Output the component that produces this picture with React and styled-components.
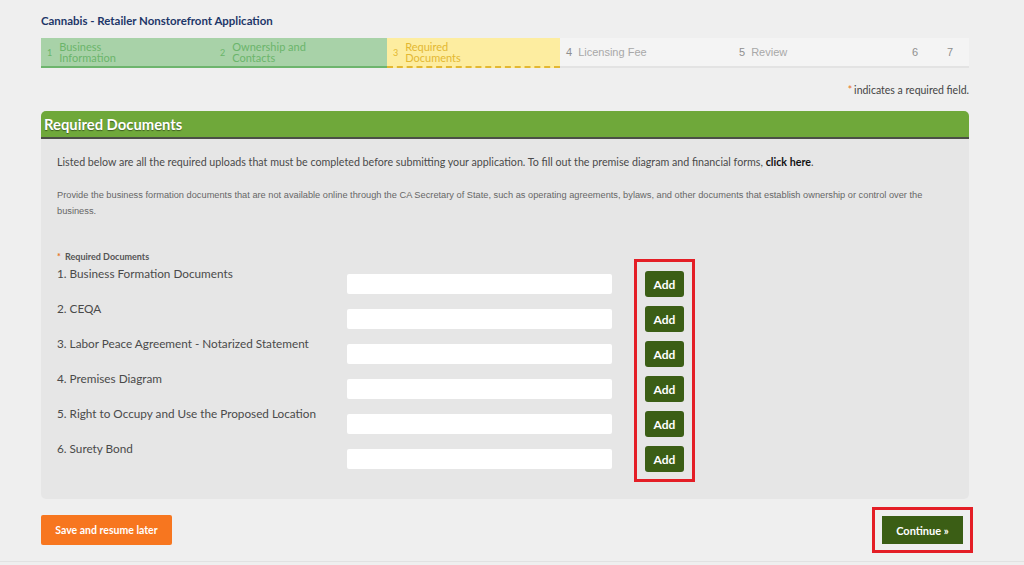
import React from "react";
import styled, { createGlobalStyle } from "styled-components";

const Global = createGlobalStyle`
  html, body { margin: 0; padding: 0; background: #efefef; }
  body { font-family: Lato, "Open Sans", sans-serif; }
  * { box-sizing: border-box; }
`;

const Page = styled.div`
  width: 1024px;
  height: 565px;
  overflow: hidden;
  background: #efefef;
  display: flex;
  flex-direction: column;
`;

const Wrap = styled.div`
  width: 928px;
  margin-left: 41px;
  display: flex;
  flex-direction: column;
`;

const Title = styled.div`
  margin-top: 14px;
  font-size: 11.45px;
  line-height: 14px;
  font-weight: 700;
  color: #1d3668;
`;

const Steps = styled.div`
  margin-top: 10px;
  height: 30px;
  display: flex;
  background: #f4f4f4;
`;

const stepTheme = {
  done: { bg: "#a8d2a8", border: "2px solid #6db56d", color: "#6bb56b", num: "#6bb56b", gap: 7 },
  current: { bg: "#fdeda0", border: "2px dashed #e3b832", color: "#e3b832", num: "#e3b832", gap: 7 },
  todo: { bg: "#f4f4f4", border: "2px solid #e3e3e3", color: "#a8a8a8", num: "#8f8f8f", gap: 6 },
};

const Step = styled.div`
  width: ${(p) => p.$w}px;
  display: flex;
  align-items: center;
  gap: ${(p) => stepTheme[p.$state].gap}px;
  padding-left: 6px;
  background: ${(p) => stepTheme[p.$state].bg};
  border-bottom: ${(p) => stepTheme[p.$state].border};
  color: ${(p) => stepTheme[p.$state].color};
`;

const StepNum = styled.span`
  font-size: ${(p) => (p.$state === "todo" ? 11 : 9)}px;
  font-family: ${(p) => (p.$state === "todo" ? '"Liberation Sans", Arial, sans-serif' : "Lato, sans-serif")};
  color: ${(p) => stepTheme[p.$state].num};
`;

const StepLabel = styled.span`
  font-size: 11px;
  line-height: 11px;
  font-family: ${(p) => (p.$state === "todo" ? '"Liberation Sans", Arial, sans-serif' : "Lato, sans-serif")};
`;

const Required = styled.div`
  margin-top: 15px;
  text-align: right;
  font-size: 10.5px;
  line-height: 14px;
  color: #444;
`;

const Star = styled.span`
  color: #e8731c;
  margin-right: 2px;
`;

const Panel = styled.div`
  margin-top: 14px;
  border-radius: 5px;
  background: #e6e6e6;
  display: flex;
  flex-direction: column;
`;

const PanelHead = styled.div`
  height: 28px;
  background: #6fa83a;
  border-bottom: 2px solid #4b4f46;
  border-radius: 5px 5px 0 0;
  padding-left: 3px;
  display: flex;
  align-items: center;
  color: #fff;
  font-size: 14.8px;
  font-weight: 700;
  text-shadow: 0 1px 1px rgba(0, 0, 0, 0.45);
`;

const PanelBody = styled.div`
  padding: 16px 16px 17px 16px;
  display: flex;
  flex-direction: column;
`;

const Intro = styled.p`
  margin: 0;
  font-size: 10.7px;
  line-height: 14px;
  color: #4a4a4a;
  b { color: #111; font-weight: 700; }
`;

const Note = styled.p`
  margin: 18px 0 0;
  font-family: "Liberation Sans", Arial, sans-serif;
  font-size: 9.25px;
  line-height: 16px;
  color: #666;
`;

const DocSection = styled.div`
  margin-top: 32px;
  display: flex;
  align-items: flex-start;
`;

const DocList = styled.div`
  display: flex;
  flex-direction: column;
`;

const DocHeader = styled.div`
  font-size: 9px;
  line-height: 12px;
  font-weight: 700;
  color: #555;
  margin-bottom: 4px;
`;

const DocRow = styled.div`
  height: 35px;
  display: grid;
  grid-template-columns: 290px 265px;
`;

const DocLabel = styled.div`
  font-size: 11.75px;
  line-height: 14px;
  color: #4a4a4a;
`;

const FileBox = styled.div`
  margin-top: 7px;
  height: 20px;
  background: #fff;
  border-radius: 2px;
`;

const Highlight = styled.div`
  border: 3px solid #e41e26;
  padding: ${(p) => p.$pad};
  display: flex;
  flex-direction: column;
  gap: ${(p) => p.$gap || 0}px;
  margin: ${(p) => p.$margin || 0};
`;

const AddButton = styled.button`
  width: 39px;
  height: 26px;
  border: none;
  border-radius: 3px;
  background: #3b5e15;
  color: #fff;
  font-family: Lato, sans-serif;
  font-size: 12px;
  font-weight: 700;
  padding: 0;
`;

const Footer = styled.div`
  margin-top: 8px;
  display: flex;
  justify-content: space-between;
  align-items: center;
`;

const SaveButton = styled.button`
  width: 131px;
  height: 30px;
  border: none;
  border-radius: 2px;
  background: #f7761f;
  color: #fff;
  font-family: Lato, sans-serif;
  font-size: 10.5px;
  font-weight: 700;
  padding: 0;
`;

const ContinueButton = styled.button`
  width: 81px;
  height: 28px;
  border: none;
  background: #3b5e15;
  color: #fff;
  font-family: Lato, sans-serif;
  font-size: 11px;
  font-weight: 700;
  padding: 0;
`;

const BottomLine = styled.div`
  margin-top: 8px;
  height: 1px;
  background: #e2e2e2;
`;

const steps = [
  { n: 1, label: ["Business", "Information"], state: "done", w: 173 },
  { n: 2, label: ["Ownership and", "Contacts"], state: "done", w: 173 },
  { n: 3, label: ["Required", "Documents"], state: "current", w: 173 },
  { n: 4, label: ["Licensing Fee"], state: "todo", w: 173 },
  { n: 5, label: ["Review"], state: "todo", w: 173 },
  { n: 6, label: [], state: "todo", w: 35 },
  { n: 7, label: [], state: "todo", w: 28 },
];

const docs = [
  "1. Business Formation Documents",
  "2. CEQA",
  "3. Labor Peace Agreement - Notarized Statement",
  "4. Premises Diagram",
  "5. Right to Occupy and Use the Proposed Location",
  "6. Surety Bond",
];

export default function App() {
  return (
    <Page>
      <Global />
      <Wrap>
        <Title>Cannabis - Retailer Nonstorefront Application</Title>
        <Steps>
          {steps.map((s) => (
            <Step key={s.n} $w={s.w} $state={s.state}>
              <StepNum $state={s.state}>{s.n}</StepNum>
              {s.label.length > 0 && (
                <StepLabel $state={s.state}>
                  {s.label.map((l, i) => (
                    <React.Fragment key={i}>
                      {i > 0 && <br />}
                      {l}
                    </React.Fragment>
                  ))}
                </StepLabel>
              )}
            </Step>
          ))}
        </Steps>
        <Required>
          <Star>*</Star>indicates a required field.
        </Required>
        <Panel>
          <PanelHead>Required Documents</PanelHead>
          <PanelBody>
            <Intro>
              Listed below are all the required uploads that must be completed before submitting your
              application. To fill out the premise diagram and financial forms, <b>click here</b>.
            </Intro>
            <Note>
              Provide the business formation documents that are not available online through the CA
              Secretary of State, such as operating agreements, bylaws, and other documents that
              establish ownership or control over the business.
            </Note>
            <DocSection>
              <DocList>
                <DocHeader>
                  <Star>*</Star> Required Documents
                </DocHeader>
                {docs.map((d) => (
                  <DocRow key={d}>
                    <DocLabel>{d}</DocLabel>
                    <FileBox />
                  </DocRow>
                ))}
              </DocList>
              <Highlight $pad="9px 8px 7px" $gap={9} $margin="8px 0 0 22px">
                {docs.map((d) => (
                  <AddButton key={d}>Add</AddButton>
                ))}
              </Highlight>
            </DocSection>
          </PanelBody>
        </Panel>
        <Footer>
          <SaveButton>Save and resume later</SaveButton>
          <Highlight $pad="6px 7px" $margin="0 -4px 0 0">
            <ContinueButton>Continue »</ContinueButton>
          </Highlight>
        </Footer>
      </Wrap>
      <BottomLine />
    </Page>
  );
}
